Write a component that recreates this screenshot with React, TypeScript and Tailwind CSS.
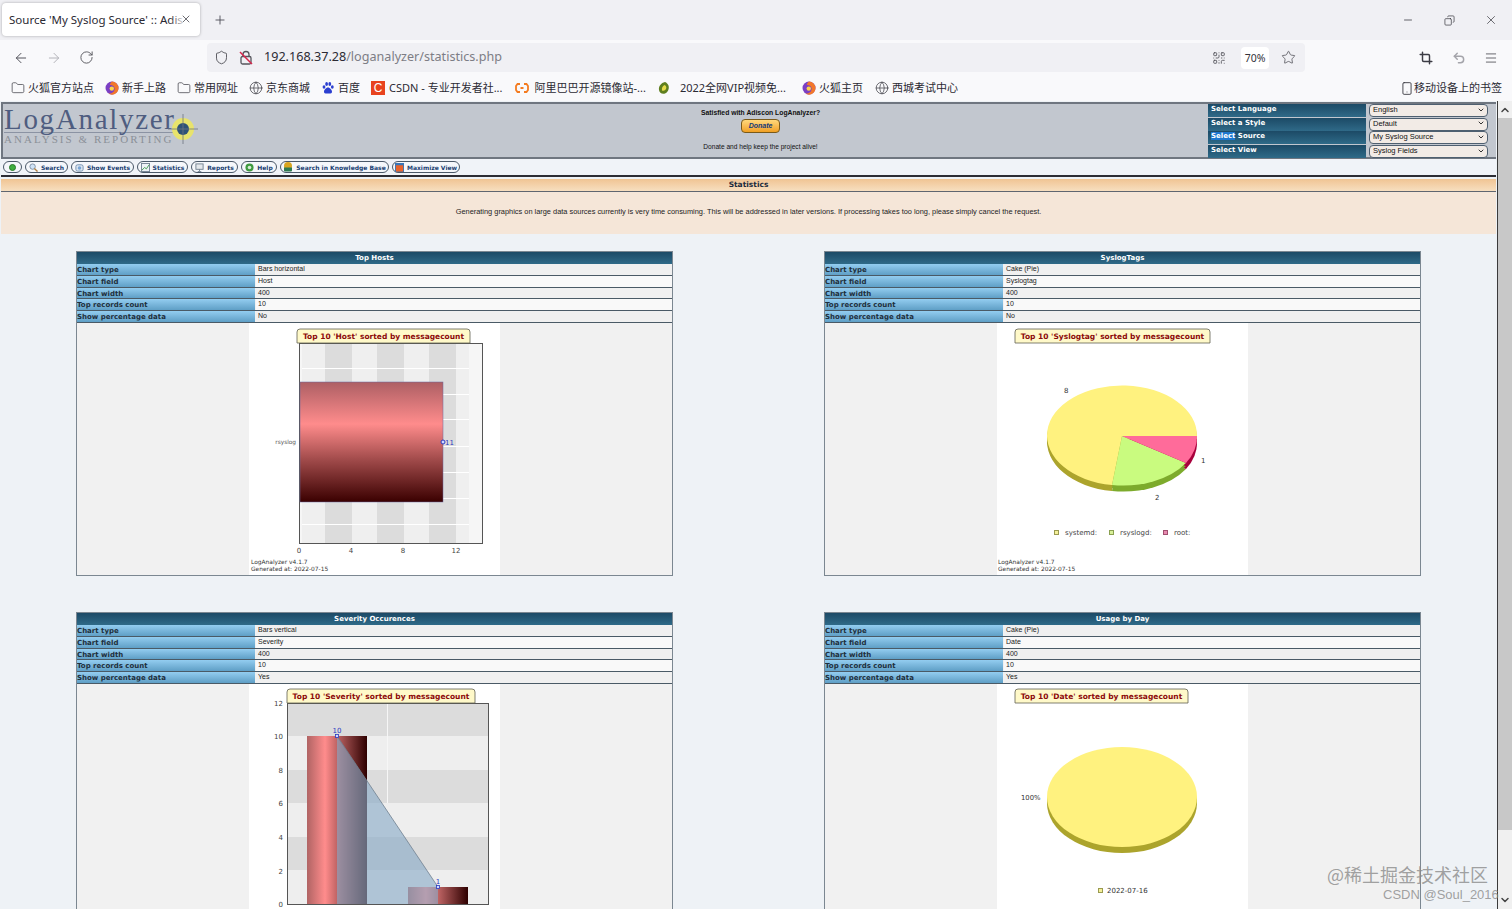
import { ArrowLeft, ArrowRight, RotateCw, Shield, Star, QrCode, Crop, Undo2, Menu, Folder, Globe, Minus, X, Plus, Smartphone, ChevronUp, ChevronDown, Copy } from 'lucide-react';

const dv = { fontFamily: '"DejaVu Sans", sans-serif' };

function FoxIcon() {
  return (
    <svg viewBox="0 0 14 14" className="w-[14px] h-[14px] shrink-0">
      <circle cx="7" cy="7" r="6.5" fill="#7b3fc4" />
      <path d="M7 .5a6.5 6.5 0 0 1 6.5 6.5A6.5 6.5 0 0 1 3 12.2C6 13 10 11 9.6 7.4 9.3 5 7 3.6 4.8 4 5 2.400 6 1.200 7 .5z" fill="#f2772a" />
      <circle cx="6.800" cy="7.600" r="2.200" fill="#fbd34a" />
    </svg>
  );
}

function PawIcon() {
  return (
    <svg viewBox="0 0 14 14" className="w-[14px] h-[14px] shrink-0" fill="#2b3fd0">
      <ellipse cx="3" cy="6" rx="1.400" ry="1.800" />
      <ellipse cx="5.600" cy="3" rx="1.400" ry="1.900" />
      <ellipse cx="8.800" cy="3" rx="1.400" ry="1.900" />
      <ellipse cx="11.300" cy="6" rx="1.400" ry="1.800" />
      <path d="M7 6.500c-2 0-4 2.500-4 4.300C3 12.800 5 12.500 7 12.500s4 .3 4-1.700C11 9 9 6.500 7 6.500z" />
    </svg>
  );
}

function CsdnIcon() {
  return (
    <span className="w-[14px] h-[14px] shrink-0 bg-[#e8431f] text-white text-[12px] leading-[14px] text-center font-['Liberation_Sans',sans-serif]">C</span>
  );
}

function AliIcon() {
  return (
    <svg viewBox="0 0 14 14" className="w-[14px] h-[14px] shrink-0" fill="none" stroke="#f47b20" strokeWidth="1.800">
      <path d="M5 3H2.500L1 5v4l1.500 2H5M9 3h2.500L13 5v4l-1.500 2H9M5.500 7h3" />
    </svg>
  );
}

function LemonIcon() {
  return (
    <svg viewBox="0 0 14 14" className="w-[14px] h-[14px] shrink-0">
      <path d="M8 1C4 2 1.500 5 2 9c.3 2.500 3 4.500 6 3.500 3-1 4.500-5 3.500-8C11 3 9.500 1.500 8 1z" fill="#5f7f1e" />
      <path d="M7.500 4C5.500 5 4.500 7 5 9.500c2 .8 4-.5 4.300-2.500.2-1.300-.6-2.500-1.800-3z" fill="#e6dc4a" />
    </svg>
  );
}

const folderIcon = <Folder className="w-[14px] h-[14px] shrink-0 text-[#45454d]" strokeWidth={1.300} />;
const globeIcon = <Globe className="w-[14px] h-[14px] shrink-0 text-[#45454d]" strokeWidth={1.300} />;

const bookmarks = [
  { icon: folderIcon, label: '火狐官方站点', cls: 'gap-[3px]' },
  { icon: <FoxIcon />, label: '新手上路', cls: 'gap-[3px]' },
  { icon: folderIcon, label: '常用网址', cls: 'gap-[3px]' },
  { icon: globeIcon, label: '京东商城', cls: 'gap-[3px]' },
  { icon: <PawIcon />, label: '百度', cls: 'gap-[3px]' },
  { icon: <CsdnIcon />, label: 'CSDN - 专业开发者社...', cls: 'gap-[4px]' },
  { icon: <AliIcon />, label: '阿里巴巴开源镜像站-...', cls: 'gap-[6px] ml-[1px]' },
  { icon: <LemonIcon />, label: '2022全网VIP视频免...', cls: 'gap-[9px]' },
  { icon: <FoxIcon />, label: '火狐主页', cls: 'gap-[3px] ml-[5px]' },
  { icon: globeIcon, label: '西城考试中心', cls: 'gap-[3px] ml-[1px]' },
];

function BrowserChrome() {
  return (
    <div className="shrink-0 font-['Noto_Sans','Noto_Sans_CJK_SC',sans-serif] text-[#2b2a33]">
      {/* tabs */}
      <div className="h-[40px] bg-[#f0f0f4] flex items-start pl-[2px] pt-[3px]">
        <div className="relative w-[198px] h-[33px] bg-white rounded shadow-[0_0_3px_rgba(0,0,0,0.3)] flex items-center pl-[7px] overflow-hidden">
          <span className="text-[11.500px] whitespace-nowrap">Source 'My Syslog Source' :: Adis</span>
          <div className="absolute right-[14px] top-0 bottom-0 w-[16px] bg-gradient-to-r from-transparent to-white" />
          <X className="absolute right-[8px] top-[10px] w-[12px] h-[12px] text-[#3c3c44]" strokeWidth={1.500} />
        </div>
        <Plus className="ml-[13px] mt-[10px] w-[14px] h-[14px] text-[#4a4a52]" strokeWidth={1.500} />
        <div className="ml-auto flex items-center h-[34px] pr-[14px] text-[#33333b]">
          <Minus className="w-[12px] h-[12px]" strokeWidth={1.500} />
          <Copy className="ml-[30px] w-[11px] h-[11px] -scale-x-100" strokeWidth={1.500} />
          <X className="ml-[29px] w-[14px] h-[14px]" strokeWidth={1.200} />
        </div>
      </div>
      {/* url bar */}
      <div className="h-[35px] bg-[#f9f9fb] flex items-center pl-[13px] pr-[14px]">
        <ArrowLeft className="w-[16px] h-[16px] text-[#55555c]" strokeWidth={1.500} />
        <ArrowRight className="ml-[17px] w-[16px] h-[16px] text-[#b4b4ba]" strokeWidth={1.500} />
        <RotateCw className="ml-[17px] w-[15px] h-[15px] text-[#55555c]" strokeWidth={1.500} />
        <div className="ml-[113px] w-[1098px] h-[29px] bg-[#f0f0f4] rounded flex items-center pl-[7px] pr-[9px]">
          <Shield className="w-[15px] h-[15px] text-[#55555c]" strokeWidth={1.500} />
          <div className="relative ml-[10px] w-[14px] h-[15px]">
            <svg viewBox="0 0 14 15" className="w-[14px] h-[15px]" fill="none" strokeWidth="1.300">
              <rect x="2" y="6.500" width="10" height="7.500" rx="1.500" stroke="#55555c" />
              <path d="M4 6.500V4.500a3 3 0 0 1 6 0v2" stroke="#55555c" />
              <path d="M1 2l12 12" stroke="#d7264c" strokeWidth="1.500" />
            </svg>
          </div>
          <span className="ml-[11px] text-[12.600px] whitespace-nowrap">
            192.168.37.28<span className="text-[#7d7d85]">/loganalyzer/statistics.php</span>
          </span>
          <QrCode className="ml-auto w-[14px] h-[14px] text-[#55555c]" strokeWidth={1.500} />
          <span className="ml-[15px] w-[28px] h-[22px] bg-white rounded-sm text-[10.500px] leading-[22px] text-center text-[#33333b]">70%</span>
          <Star className="ml-[12px] w-[15px] h-[15px] text-[#55555c]" strokeWidth={1.300} />
        </div>
        <Crop className="ml-auto w-[14px] h-[14px] text-[#3c3c44]" strokeWidth={2.500} />
        <Undo2 className="ml-[19px] w-[14px] h-[14px] text-[#a4a4aa]" strokeWidth={2.500} />
        <Menu className="ml-[18px] w-[14px] h-[14px] text-[#55555c]" strokeWidth={1.500} />
      </div>
      {/* bookmarks */}
      <div className="h-[26px] bg-[#f9f9fb] flex items-center pl-[11px] pr-[10px] text-[11px] gap-[11px]">
        {bookmarks.map((b) => (
          <div key={b.label} className={`flex items-center whitespace-nowrap ${b.cls}`}>
            {b.icon}
            <span>{b.label}</span>
          </div>
        ))}
        <div className="ml-auto flex items-center whitespace-nowrap">
          <Smartphone className="w-[14px] h-[15px] text-[#33333b]" strokeWidth={1.500} />
          <span>移动设备上的书签</span>
        </div>
      </div>
    </div>
  );
}

const menuItems = [
  { label: '', w: 'w-[19px]', icon: <span className="w-[7px] h-[7px] rounded-full bg-[#3fae3f] border border-[#2a7a2a]" /> },
  { label: 'Search', w: 'w-[43px]', icon: <svg viewBox="0 0 10 10" className="w-[9px] h-[9px]"><circle cx="4" cy="4" r="3" fill="#cfe3f7" stroke="#7a8ca0" /><path d="M6 6l3.500 3.500" stroke="#b08040" strokeWidth="1.500" /></svg> },
  { label: 'Show Events', w: 'w-[63px]', icon: <svg viewBox="0 0 10 10" className="w-[9px] h-[9px]"><rect x="1" y="2" width="8" height="7" rx="2" fill="#dfe8f2" stroke="#6f8cab" /><circle cx="5" cy="5.500" r="2" fill="#7aa6d6" /></svg> },
  { label: 'Statistics', w: 'w-[51px]', icon: <svg viewBox="0 0 10 10" className="w-[9px] h-[9px]"><rect x=".5" y=".5" width="9" height="9" fill="#eef2f6" stroke="#6f7f8f" /><path d="M1 8l3-3 2 1.500L9 2" fill="none" stroke="#3c9a4a" /></svg> },
  { label: 'Reports', w: 'w-[47px]', icon: <svg viewBox="0 0 10 10" className="w-[9px] h-[9px]"><rect x="1" y="1" width="8" height="6" fill="#e4e8ec" stroke="#6f7f8f" /><path d="M5 7v2M3 9.500h4" stroke="#6f7f8f" /></svg> },
  { label: 'Help', w: 'w-[36px]', icon: <svg viewBox="0 0 10 10" className="w-[9px] h-[9px]"><circle cx="5" cy="5" r="4.500" fill="#3f9a3f" /><circle cx="5" cy="5" r="2" fill="#d6ecd6" /></svg> },
  { label: 'Search in Knowledge Base', w: 'w-[109px]', icon: <svg viewBox="0 0 10 10" className="w-[10px] h-[10px]"><circle cx="5" cy="4" r="4" fill="#d9a520" /><path d="M1 5.500h8v3a1 1 0 0 1-1 1H2a1 1 0 0 1-1-1z" fill="#2f7a50" /></svg> },
  { label: 'Maximize View', w: 'w-[68px]', icon: <svg viewBox="0 0 10 10" className="w-[9px] h-[9px]"><rect width="10" height="10" fill="#3a76b8" /><rect x="1" y="2.500" width="8" height="7" fill="#e8632c" /></svg> },
];

const selects = [
  { label: 'Select Language', value: 'English' },
  { label: 'Select a Style', value: 'Default' },
  { label: 'Select Source', value: 'My Syslog Source' },
  { label: 'Select View', value: 'Syslog Fields' },
];

function Logo() {
  return (
    <div className="relative w-[200px] pl-[1px] pt-[2px]">
      <div className="font-['Liberation_Serif',serif] text-[29px] leading-[26px] tracking-[1.700px] text-[#4f5d80] border-b border-[#8b93a3] whitespace-nowrap w-[172px]">LogAnalyzer</div>
      <div className="font-['Liberation_Serif',serif] text-[11px] leading-[12px] tracking-[2.050px] text-[#8b9098] whitespace-nowrap">ANALYSIS &amp; REPORTING</div>
      <svg viewBox="0 0 30 30" className="absolute left-[165px] top-[10px] w-[30px] h-[30px]">
        <circle cx="15" cy="15" r="11" fill="#e8e36c" />
        <circle cx="15" cy="15" r="6" fill="#2f5277" />
        <path d="M0 15h30M15 0v30" stroke="#6c7480" strokeWidth=".8" />
      </svg>
    </div>
  );
}

function PageHeader() {
  return (
    <div className="h-[57px] mx-[1px] mt-[1px] bg-[#c2c7cf] border-y-2 border-l-2 border-y-[#6f7680] border-l-[#6f7680] flex">
      <Logo />
      <div className="flex-1 flex flex-col items-center pt-[4px] pl-[110px] font-['Liberation_Sans',sans-serif] text-[6.600px] text-[#111]">
        <b className="leading-[9px] text-[6.800px]">Satisfied with Adiscon LogAnalyzer?</b>
        <span className="mt-[2px] w-[39px] h-[14px] border border-[#7a5a1a] rounded-sm bg-gradient-to-b from-[#ffd87a] to-[#f0a020] text-[7px] leading-[12px] text-center italic font-bold text-[#123a7a]">Donate</span>
        <span className="mt-[9px] leading-[9px]">Donate and help keep the project alive!</span>
      </div>
      <div className="w-[288px] grid grid-cols-[158px_119px] gap-x-[3px] content-start bg-[#c2c7cf]">
        {selects.map((s) => (
          <div key={s.label} className="contents">
            <div style={dv} className="h-[13px] mb-[.7px] pl-[3px] bg-gradient-to-b from-[#1c4a66] to-[#2f6a88] text-white font-bold text-[7px] leading-[11px] whitespace-nowrap">
              {s.label === 'Select Source' ? (<><span className="bg-[#1e78d0]">Select</span> Source</>) : s.label}
            </div>
            <div className="h-[13px] mb-[.7px] pl-[3px] pr-[2px] pb-[2px] bg-[#f2ebe6] border border-[#4e5f70] rounded-sm flex items-center justify-between font-['Liberation_Sans',sans-serif] text-[7.500px] text-[#111]">
              {s.value}
              <ChevronDown className="w-[8px] h-[8px] text-[#333]" strokeWidth={3} />
            </div>
          </div>
        ))}
      </div>
    </div>
  );
}

function PageMenu() {
  return (
    <div className="h-[18px] mx-[1px] bg-[#f0f3f8] border-b-2 border-[#2c2c34] flex items-center gap-[3px] pl-[2px]">
      {menuItems.map((m) => (
        <div key={m.label} style={dv} className={`${m.w} h-[12px] shrink-0 border border-[#4a5868] rounded-full bg-[#f5f7fb] flex items-center justify-center gap-[3px] text-[6px] font-bold text-[#1a3f72] whitespace-nowrap`}>
          {m.icon}
          {m.label && <span>{m.label}</span>}
        </div>
      ))}
    </div>
  );
}

function ChartTag({ x, w, y, label }: { x: number; w: number; y: number; label: string }) {
  return (
    <g>
      <path d={`M${x} ${y + 14}v-11a3 3 0 0 1 3-3h${w - 6}a3 3 0 0 1 3 3v11z`} fill="#fff9c9" stroke="#5f5f50" strokeWidth=".8" />
      <text x={x + w / 2} y={y + 10} textAnchor="middle" fontSize="7.500" fontWeight="bold" fill="#8c0a0a" style={dv}>{label}</text>
    </g>
  );
}

function ChartFooter() {
  return (
    <g fontSize="5.900" fill="#333" style={dv}>
      <text x="1" y="241">LogAnalyzer v4.1.7</text>
      <text x="1" y="248">Generated at: 2022-07-15</text>
    </g>
  );
}

function HostsChart() {
  return (
    <svg viewBox="-1 0 251 252" className="w-[251px] h-[252px] bg-white">
      <defs>
        <linearGradient id="hbar" x1="0" y1="0" x2="0" y2="1">
          <stop offset="0" stopColor="#ad5f64" />
          <stop offset=".35" stopColor="#ff8c8c" />
          <stop offset=".65" stopColor="#a04a4a" />
          <stop offset="1" stopColor="#3a0000" />
        </linearGradient>
      </defs>
      <rect x="49" y="20" width="183" height="200" fill="#f6f6f6" />
      <rect x="52" y="20" width="167" height="200" fill="#efefef" />
      {[75, 127, 179].map((x) => <rect key={x} x={x} y="20" width="27" height="200" fill="#dcdcdc" />)}
      {[45, 71, 96, 123, 149, 175, 201].map((y) => <rect key={y} x="52" y={y} width="167" height="1" fill="#fff" />)}
      <rect x="49.500" y="20.500" width="183" height="200" fill="none" stroke="#555" />
      <rect x="50" y="59" width="143" height="120" fill="url(#hbar)" stroke="#6a6aa0" strokeWidth=".5" />
      <circle cx="193" cy="119" r="2" fill="#d0d8ff" stroke="#2a3ac0" />
      <text x="195" y="122" fontSize="7" fill="#2a3ac0" style={dv}>11</text>
      <text x="46" y="121" textAnchor="end" fontSize="5.800" fill="#555" style={dv}>rsyslog</text>
      <g fontSize="7" fill="#444" textAnchor="middle" style={dv}>
        <text x="49" y="230">0</text>
        <text x="101" y="230">4</text>
        <text x="153" y="230">8</text>
        <text x="206" y="230">12</text>
      </g>
      <ChartTag x={47} w={173} y={6} label="Top 10 'Host' sorted by messagecount" />
      <ChartFooter />
    </svg>
  );
}

const slices = [
  { d: 'M125 113L115 162A75 50 0 1 1 200 113Z', top: '#fff27f', side: '#aca42c' },
  { d: 'M125 113L189 140A75 50 0 0 1 115 162Z', top: '#c9fb7f', side: '#7dab2c' },
  { d: 'M125 113L200 113A75 50 0 0 1 189 140Z', top: '#ff6b9a', side: '#a8003c' },
];

function SyslogChart() {
  return (
    <svg viewBox="0 0 251 252" className="w-[251px] h-[252px] bg-white">
      <g transform="translate(0 6)">{slices.map((s) => <path key={s.d} d={s.d} fill={s.side} />)}</g>
      <g transform="translate(0 3)">{slices.map((s) => <path key={s.d} d={s.d} fill={s.side} />)}</g>
      {slices.map((s) => <path key={s.d} d={s.d} fill={s.top} />)}
      <g fontSize="7" fill="#333" style={dv}>
        <text x="67" y="70">8</text>
        <text x="204" y="140">1</text>
        <text x="158" y="177">2</text>
      </g>
      <g fontSize="7" fill="#444" style={dv}>
        <rect x="57.500" y="207.500" width="4" height="4" fill="#f5f09a" stroke="#9a9a50" />
        <text x="68" y="212">systemd:</text>
        <rect x="112.500" y="207.500" width="4" height="4" fill="#d8f09a" stroke="#8aa050" />
        <text x="123" y="212">rsyslogd:</text>
        <rect x="166.500" y="207.500" width="4" height="4" fill="#e88ab0" stroke="#a05070" />
        <text x="177" y="212">root:</text>
      </g>
      <ChartTag x={18} w={195} y={6} label="Top 10 'Syslogtag' sorted by messagecount" />
      <ChartFooter />
    </svg>
  );
}

function SeverityChart() {
  return (
    <svg viewBox="-1 0 251 252" className="w-[251px] h-[252px] bg-white">
      <defs>
        <linearGradient id="vbar" x1="0" y1="0" x2="1" y2="0">
          <stop offset="0" stopColor="#b06464" />
          <stop offset=".3" stopColor="#ff8c8c" />
          <stop offset=".55" stopColor="#b05a5a" />
          <stop offset="1" stopColor="#2e0000" />
        </linearGradient>
      </defs>
      <rect x="37" y="19" width="201" height="201" fill="#eeeeee" />
      {[19, 86, 153].map((y) => <rect key={y} x="37" y={y} width="201" height="33" fill="#dcdcdc" />)}
      <rect x="137" y="19" width="1" height="100" fill="#f6f6f6" />
      <rect x="57" y="52" width="60" height="168" fill="url(#vbar)" />
      <rect x="158" y="203" width="60" height="17" fill="url(#vbar)" />
      <path d="M87 52L188 203V220H87Z" fill="#87a9c6" fillOpacity=".62" />
      <path d="M87 52L188 203" stroke="#708090" strokeWidth=".8" />
      <rect x="37.500" y="19.500" width="201" height="201" fill="none" stroke="#555" />
      <rect x="85.500" y="50.500" width="3" height="3" fill="#d0d8ff" stroke="#2a3ac0" strokeWidth=".8" />
      <rect x="186.500" y="201.500" width="3" height="3" fill="#d0d8ff" stroke="#2a3ac0" strokeWidth=".8" />
      <text x="87" y="49" textAnchor="middle" fontSize="7" fill="#2a3ac0" style={dv}>10</text>
      <text x="188" y="200" textAnchor="middle" fontSize="7" fill="#2a3ac0" style={dv}>1</text>
      <g fontSize="7" fill="#444" textAnchor="end" style={dv}>
        {[[12, 22], [10, 55], [8, 89], [6, 122], [4, 156], [2, 190], [0, 223]].map(([n, y]) => (
          <text key={n} x="33" y={y}>{n}</text>
        ))}
      </g>
      <ChartTag x={37} w={188} y={5} label="Top 10 'Severity' sorted by messagecount" />
    </svg>
  );
}

function DayChart() {
  return (
    <svg viewBox="0 0 251 252" className="w-[251px] h-[252px] bg-white">
      <ellipse cx="125" cy="119" rx="75" ry="50" fill="#aca42c" />
      <rect x="50" y="113" width="150" height="6" fill="#aca42c" />
      <ellipse cx="125" cy="113" rx="75" ry="50" fill="#fff27f" />
      <text x="24" y="116" fontSize="6.800" fill="#333" style={dv}>100%</text>
      <rect x="101.500" y="204.500" width="4" height="4" fill="#f5f09a" stroke="#9a9a50" />
      <text x="110" y="209" fontSize="7" fill="#333" style={dv}>2022-07-16</text>
      <ChartTag x={18} w={173} y={5} label="Top 10 'Date' sorted by messagecount" />
    </svg>
  );
}

const cards = [
  { title: 'Top Hosts', type: 'Bars horizontal', field: 'Host', pct: 'No', chart: <HostsChart /> },
  { title: 'SyslogTags', type: 'Cake (Pie)', field: 'Syslogtag', pct: 'No', chart: <SyslogChart /> },
  { title: 'Severity Occurences', type: 'Bars vertical', field: 'Severity', pct: 'Yes', chart: <SeverityChart /> },
  { title: 'Usage by Day', type: 'Cake (Pie)', field: 'Date', pct: 'Yes', chart: <DayChart /> },
];

function ChartCard({ card }: { card: (typeof cards)[number] }) {
  const rows = [
    ['Chart type', card.type],
    ['Chart field', card.field],
    ['Chart width', '400'],
    ['Top records count', '10'],
    ['Show percentage data', card.pct],
  ];
  return (
    <div className="h-[325px] border border-[#7b8791] bg-[#f1f1f1] flex flex-col">
      <div style={dv} className="h-[12px] shrink-0 bg-gradient-to-b from-[#1c4a66] to-[#2f6a88] text-white font-bold text-[7px] leading-[12px] text-center">{card.title}</div>
      {rows.map(([k, v], i) => (
        <div key={k} className="h-[11.750px] shrink-0 grid grid-cols-[178px_1fr] grid-rows-[10.750px] gap-x-[1px] border-b border-[#4a5a66]">
          <div style={dv} className="overflow-hidden bg-gradient-to-b from-[#93cdf0] to-[#5f9fc6] text-[#1e2f3c] font-bold text-[7px] leading-[12px] whitespace-nowrap">{k}</div>
          <div className={`pl-[2px] font-['Liberation_Sans',sans-serif] text-[7px] leading-[9px] text-[#222] ${i % 2 ? 'bg-[#f9f9f9]' : 'bg-[#f0f0f0]'}`}>{v}</div>
        </div>
      ))}
      <div className="flex justify-center">{card.chart}</div>
    </div>
  );
}

function Scrollbar() {
  return (
    <div className="w-[15px] shrink-0 bg-[#f0f0f0] border-l border-[#3a3a3a] flex flex-col items-center">
      <ChevronUp className="w-[12px] h-[12px] mt-[3px] text-[#444]" strokeWidth={3} />
      <div className="w-full h-[712px] mt-[2px] bg-[#c8c8c8]" />
      <ChevronDown className="w-[12px] h-[12px] mt-auto mb-[3px] text-[#444]" strokeWidth={3} />
    </div>
  );
}

export default function App() {
  return (
    <div className="relative w-[1512px] h-[909px] overflow-hidden flex flex-col bg-[#eef2f6]">
      <BrowserChrome />
      <div className="flex-1 min-h-0 flex">
        <div className="flex-1 min-w-0 overflow-hidden bg-[#eef2f6]">
          <PageHeader />
          <PageMenu />
          <div style={dv} className="h-[13px] mx-[1px] mt-[2px] bg-gradient-to-b from-[#f0c493] to-[#f7dfc0] border-b border-[#5f6670] text-[7.500px] font-bold leading-[12px] text-center text-[#1a2a3c]">Statistics</div>
          <div className="h-[42px] mx-[1px] bg-[#f5e6d8] flex items-center justify-center font-['Liberation_Sans',sans-serif] text-[7.400px] text-[#222] pb-[2px]">
            Generating graphics on large data sources currently is very time consuming. This will be addressed in later versions. If processing takes too long, please simply cancel the request.
          </div>
          <div className="mt-[17px] grid grid-cols-[597px_597px] justify-center gap-x-[151px] gap-y-[36px]">
            {cards.map((c) => <ChartCard key={c.title} card={c} />)}
          </div>
        </div>
        <Scrollbar />
      </div>
      <div className="absolute left-[1327px] top-[863px] text-[18px] leading-[22px] text-[#8a8a8a]/80 font-['Noto_Sans_CJK_SC',sans-serif] whitespace-nowrap">@稀土掘金技术社区</div>
      <div className="absolute left-[1383px] top-[886px] text-[13px] leading-[17px] text-[#8a8a8a]/80 font-['Liberation_Sans',sans-serif] whitespace-nowrap">CSDN @Soul_2016</div>
    </div>
  );
}
